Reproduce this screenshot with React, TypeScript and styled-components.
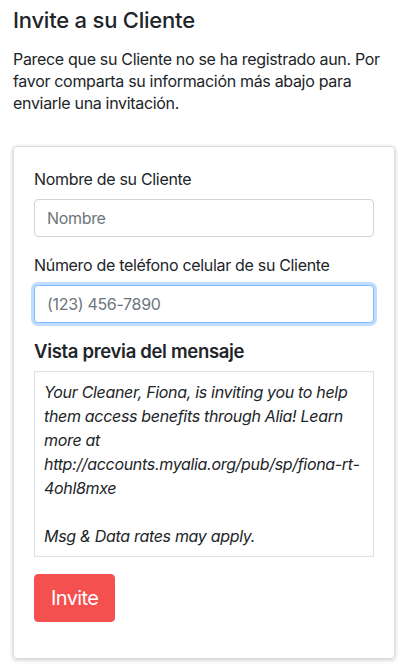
import React from "react";
import styled, { createGlobalStyle } from "styled-components";

const GlobalStyle = createGlobalStyle`
  * {
    box-sizing: border-box;
  }

  body {
    margin: 0;
    background: #fff;
    color: #212529;
    font-family: Inter, "Liberation Sans", Arial, sans-serif;
    letter-spacing: -0.02em;
  }
`;

const Page = styled.div`
  padding: 5px 13px 13px;
`;

const Title = styled.h1`
  font-size: 22px;
  font-weight: 500;
  line-height: 30px;
  letter-spacing: -0.01em;
  margin: 0 0 13px;
`;

const Intro = styled.p`
  font-size: 16px;
  line-height: 22px;
  margin: 0 0 32px;
  padding-right: 4px;
`;

const Card = styled.form`
  border: 1px solid #dcdcdc;
  border-radius: 4px;
  box-shadow: 0 1px 4px rgba(0, 0, 0, 0.22);
  padding: 20px;
  display: flex;
  flex-direction: column;
`;

const Field = styled.div`
  display: flex;
  flex-direction: column;
  margin-bottom: 16px;
`;

const Label = styled.label`
  font-size: 16px;
  line-height: 24px;
  margin-bottom: 8px;
`;

const Input = styled.input<{ $focused?: boolean }>`
  height: 38px;
  padding: 6px 12px;
  font-size: 16px;
  font-family: inherit;
  letter-spacing: inherit;
  color: #495057;
  caret-color: #212529;
  border: 1px solid ${p => (p.$focused ? "#80bdff" : "#ced4da")};
  border-radius: 4px;
  box-shadow: ${p => (p.$focused ? "0 0 0 3px rgba(0, 123, 255, 0.25)" : "none")};
  outline: none;

  &::placeholder {
    color: #6c757d;
  }
`;

const PreviewTitle = styled.h2`
  font-size: 18.5px;
  font-weight: 600;
  line-height: 24px;
  margin: 0 0 8px;
`;

const Preview = styled.div`
  border: 1px solid #dee2e6;
  padding: 8px 9px;
  font-style: italic;
  font-size: 16px;
  line-height: 24px;
  margin-bottom: 17px;
`;

const Line = styled.div`
  min-height: 24px;
`;

const InviteButton = styled.button`
  align-self: flex-start;
  background: #f55050;
  color: #fff;
  border: 1px solid #f55050;
  border-radius: 4px;
  font-family: inherit;
  font-size: 20px;
  letter-spacing: -0.03em;
  line-height: 30px;
  padding: 8px 16px;
  margin-bottom: 16px;
  cursor: pointer;
`;

export default function App() {
  return (
    <Page>
      <GlobalStyle />
      <Title>Invite a su Cliente</Title>
      <Intro>
        Parece que su Cliente no se ha registrado aun. Por favor comparta su
        información más abajo para enviarle una invitación.
      </Intro>
      <Card onSubmit={e => e.preventDefault()}>
        <Field>
          <Label>Nombre de su Cliente</Label>
          <Input placeholder="Nombre" />
        </Field>
        <Field>
          <Label>Número de teléfono celular de su Cliente</Label>
          <Input $focused autoFocus placeholder="(123) 456-7890" />
        </Field>
        <PreviewTitle>Vista previa del mensaje</PreviewTitle>
        <Preview>
          <Line>
            Your Cleaner, Fiona, is inviting you to help them access benefits
            through Alia! Learn more at
            http://accounts.myalia.org/pub/sp/fiona-rt-4ohl8mxe
          </Line>
          <Line />
          <Line>Msg &amp; Data rates may apply.</Line>
        </Preview>
        <InviteButton type="submit">Invite</InviteButton>
      </Card>
    </Page>
  );
}
